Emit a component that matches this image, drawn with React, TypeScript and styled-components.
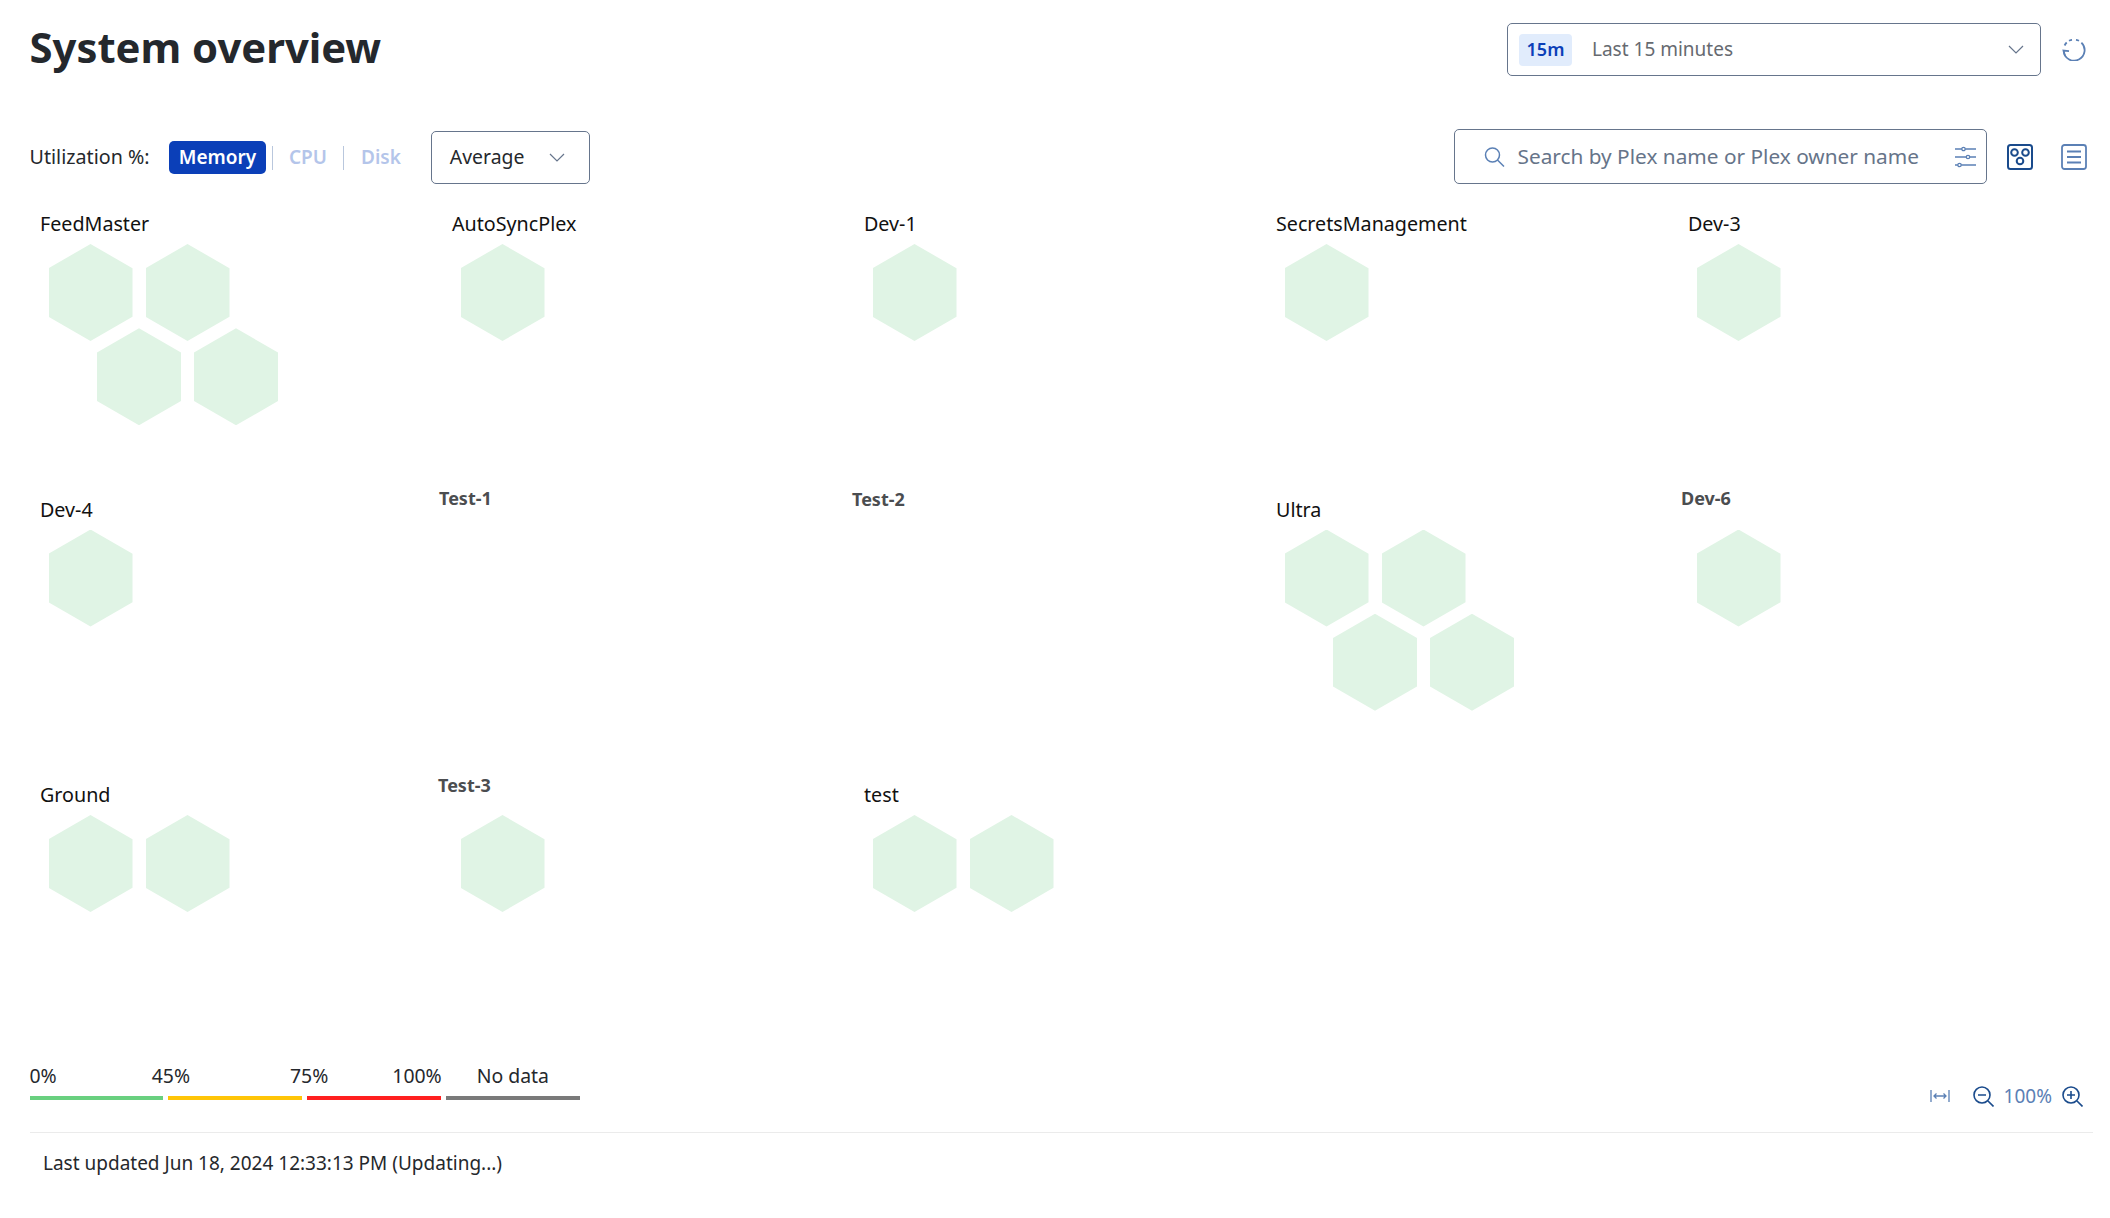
import React from "react";
import styled, { createGlobalStyle } from "styled-components";

const Global = createGlobalStyle`
  html, body { margin: 0; padding: 0; background: #fff; }
  body { font-family: "Noto Sans", sans-serif; color: #25282c; }
`;

const Page = styled.div`
  width: 2110px;
  height: 1218px;
  box-sizing: border-box;
  padding: 23px 17px 0 29.5px;
  overflow: hidden;
`;
const Header = styled.header`
  display: flex;
  justify-content: space-between;
  align-items: center;
  height: 53px;
  padding-right: 7px;
`;
const Title = styled.h1`
  margin: -5px 0 0;
  font-size: 41.8px;
  line-height: 52px;
  font-weight: 700;
  color: #24282d;
`;
const RightGroup = styled.div<{ $gap: number }>`
  display: flex;
  align-items: center;
  gap: ${(p) => p.$gap}px;
`;
const SelectBox = styled.div<{ $w: number; $h: number; $pad: number }>`
  width: ${(p) => p.$w}px;
  height: ${(p) => p.$h}px;
  box-sizing: border-box;
  padding: 0 ${(p) => p.$pad}px 0 11px;
  display: flex;
  align-items: center;
  border: 1px solid #66758c;
  border-radius: 5px;
`;
const Badge = styled.span`
  width: 53px;
  height: 32px;
  box-sizing: border-box;
  padding-bottom: 2px;
  border-radius: 4px;
  background: #e1ecfc;
  color: #0b3fb8;
  font-size: 18px;
  font-weight: 600;
  display: flex;
  align-items: center;
  justify-content: center;
`;
const RangeText = styled.span`
  margin-left: 20px;
  padding-bottom: 2px;
  font-size: 19px;
  color: #666a70;
  flex: 1;
`;
const Toolbar = styled.section`
  margin-top: 53px;
  height: 55px;
  display: flex;
  justify-content: space-between;
  align-items: flex-end;
  padding-right: 6.5px;
`;
const Filters = styled.div`
  display: flex;
  align-items: center;
  height: 53px;
`;
const FilterLabel = styled.span`
  font-size: 19.7px;
  padding-bottom: 2px;
  color: #25282c;
  width: 139.5px;
`;
const Tab = styled.span<{ $active?: boolean }>`
  height: 33px;
  box-sizing: border-box;
  padding-bottom: 2px;
  display: flex;
  align-items: center;
  justify-content: center;
  font-size: 19px;
  font-weight: 600;
  border-radius: 5px;
  width: ${(p) => (p.$active ? "97px" : "auto")};
  color: ${(p) => (p.$active ? "#ffffff" : "#b4c5ea")};
  background: ${(p) => (p.$active ? "#0b3fb8" : "transparent")};
`;
const TabDivider = styled.span<{ $l: number; $r: number }>`
  width: 1px;
  height: 24px;
  background: #b9c7dd;
  margin: 0 ${(p) => p.$r}px 0 ${(p) => p.$l}px;
`;
const AverageBox = styled(SelectBox)`
  margin-left: 30px;
  padding-left: 18px;
  justify-content: space-between;
`;
const AverageText = styled.span`
  font-size: 19.4px;
  padding-bottom: 2px;
`;
const SearchBox = styled.div`
  width: 533px;
  height: 55px;
  box-sizing: border-box;
  border: 1px solid #66758c;
  border-radius: 5px;
  display: flex;
  align-items: center;
  padding: 0 10px 0 29px;
`;
const Placeholder = styled.span`
  margin-left: 13px;
  padding-bottom: 2px;
  flex: 1;
  font-size: 20.8px;
  color: #667489;
  white-space: nowrap;
`;
const PlexGrid = styled.main`
  margin-top: 30px;
  height: 854px;
  padding-left: 10.5px;
  display: grid;
  grid-template-columns: repeat(5, 412px);
  grid-template-rows: repeat(3, 285.5px);
`;
const Cell = styled.article`
  min-width: 0;
`;
const PlexName = styled.div<{ $bold?: boolean; $dx?: number; $dy?: number }>`
  height: 20px;
  line-height: 20px;
  font-size: ${(p) => (p.$bold ? "18px" : "19.7px")};
  font-weight: ${(p) => (p.$bold ? 700 : 400)};
  color: ${(p) => (p.$bold ? "#4b4d50" : "#111")};
  margin: ${(p) => p.$dy ?? 0}px 0 ${(p) => -(p.$dy ?? 0)}px ${(p) => p.$dx ?? 0}px;
`;
const HexRows = styled.div`
  padding: 10px 0 0 8.5px;
`;
const HexRow = styled.div<{ $offset?: boolean }>`
  display: flex;
  gap: 13px;
  margin-left: ${(p) => (p.$offset ? "48.5px" : "0")};
  margin-top: ${(p) => (p.$offset ? "-12.7px" : "0")};
`;
const Hex = styled.div`
  width: 84px;
  height: 97px;
  background: #e0f4e5;
  clip-path: polygon(50% 0, 100% 25%, 100% 75%, 50% 100%, 0 75%, 0 25%);
`;
const BottomRow = styled.section`
  display: flex;
  justify-content: space-between;
  align-items: flex-end;
  height: 32px;
  padding-right: 10px;
`;
const Legend = styled.div`
  width: 550px;
`;
const LegendLabels = styled.div`
  display: flex;
  height: 20px;
  line-height: 20px;
  font-size: 19.4px;
  color: #25282c;
`;
const LegendLabel = styled.span<{ $x: number }>`
  margin-left: ${(p) => p.$x}px;
`;
const LegendBars = styled.div`
  margin-top: 10px;
  display: flex;
  gap: 5px;
`;
const LegendBar = styled.div<{ $c: string }>`
  width: 134px;
  height: 4px;
  background: ${(p) => p.$c};
`;
const ZoomControls = styled.div`
  display: flex;
  align-items: center;
  margin-bottom: -7px;
  height: 22px;
  color: #5b80b5;
  font-size: 19px;
`;
const ZoomSpacer = styled.span`
  width: 23px;
`;
const ZoomValue = styled.span`
  margin: 0 10px 0 10px;
  padding-bottom: 1px;
`;
const Footer = styled.footer`
  margin-top: 32px;
  border-top: 1px solid #ebebeb;
  padding: 20px 0 0 13.5px;
  font-size: 19px;
  line-height: 20px;
  color: #25282c;
`;

const Chevron = ({ color = "#66758c" }: { color?: string }) => (
  <svg width="16" height="9" viewBox="0 0 16 9" fill="none" stroke={color} strokeWidth="1.2">
    <path d="M1 1l7 7 7-7" />
  </svg>
);
const RefreshIcon = () => (
  <svg width="24" height="22" viewBox="0 0 24 22" fill="none" stroke="#5b80b5" strokeWidth="1.8">
    <path d="M2.600 6.500A10.500 10.500 0 0 1 4.700 3.500" />
    <path d="M7 1.800A10.500 10.500 0 0 1 10 .8" />
    <path d="M14 .8A10.500 10.500 0 0 1 17 1.800" />
    <path d="M19.400 3.600A10.500 10.500 0 1 1 1.700 12.500" />
    <path d="M7 12.200L1.500 11.500 3 17" />
  </svg>
);
const SearchIcon = () => (
  <svg width="21" height="20" viewBox="0 0 21 20" fill="none" stroke="#5b80b5" strokeWidth="1.5">
    <circle cx="8.500" cy="8" r="7" />
    <path d="M13.500 13l6.500 6.500" />
  </svg>
);
const SlidersIcon = () => (
  <svg width="22" height="22" viewBox="0 0 22 22" fill="none" stroke="#5b80b5" strokeWidth="1.300">
    <path d="M1 3h6.800M11.200 3H22M1 11h11.300M15.700 11H22M1 19h2.800M7.200 19H22" />
    <circle cx="9.500" cy="3" r="1.700" />
    <circle cx="14" cy="11" r="1.700" />
    <circle cx="5.500" cy="19" r="1.700" />
  </svg>
);
const HexViewIcon = () => (
  <svg width="26" height="26" viewBox="0 0 26 26" fill="none" stroke="#1a4b8c" strokeWidth="2">
    <rect x="1" y="1" width="24" height="24" rx="2.500" />
    <circle cx="7.500" cy="8.500" r="3.300" />
    <circle cx="18.500" cy="8.500" r="3.300" />
    <circle cx="13" cy="17" r="3.300" />
  </svg>
);
const ListIcon = () => (
  <svg width="26" height="26" viewBox="0 0 26 26" fill="none" stroke="#5b80b5" strokeWidth="1.800">
    <rect x="1" y="1" width="24" height="24" rx="2.500" />
    <path d="M6 7.500h14M6 13h14M6 18.500h14" />
  </svg>
);
const FitIcon = () => (
  <svg width="20" height="12" viewBox="0 0 20 12" fill="none" stroke="#5b80b5" strokeWidth="1.300">
    <path d="M1 0v12M19 0v12M4 6h12M6.500 3.500L4 6l2.500 2.500M13.500 3.500L16 6l-2.500 2.500" />
  </svg>
);
const ZoomIcon = ({ plus }: { plus?: boolean }) => (
  <svg width="21" height="21" viewBox="0 0 21 21" fill="none" stroke="#1a4b8c" strokeWidth="1.600">
    <circle cx="9" cy="9" r="8" />
    <path d="M15 15l5.500 5.500M5 9h8" />
    {plus && <path d="M9 5v8" />}
  </svg>
);

const plexes: { name: string; hex: number[]; bold?: boolean; dx?: number; dy?: number }[] = [
  { name: "FeedMaster", hex: [2, 2] },
  { name: "AutoSyncPlex", hex: [1] },
  { name: "Dev-1", hex: [1] },
  { name: "SecretsManagement", hex: [1] },
  { name: "Dev-3", hex: [1] },
  { name: "Dev-4", hex: [1] },
  { name: "Test-1", hex: [], bold: true, dx: -13, dy: -12 },
  { name: "Test-2", hex: [], bold: true, dx: -12, dy: -11 },
  { name: "Ultra", hex: [2, 2] },
  { name: "Dev-6", hex: [1], bold: true, dx: -7, dy: -12 },
  { name: "Ground", hex: [2] },
  { name: "Test-3", hex: [1], bold: true, dx: -14, dy: -10 },
  { name: "test", hex: [2] },
];

const legend = [
  { label: "0%", x: 0 },
  { label: "45%", x: 95 },
  { label: "75%", x: 100 },
  { label: "100%", x: 64 },
  { label: "No data", x: 35 },
];
const bars = ["#69d07f", "#ffc507", "#ff2020", "#7a7a7a"];

export default function App() {
  return (
    <Page>
      <Global />
      <Header>
        <Title>System overview</Title>
        <RightGroup $gap={21}>
          <SelectBox $w={534} $h={53} $pad={16}>
            <Badge>15m</Badge>
            <RangeText>Last 15 minutes</RangeText>
            <Chevron />
          </SelectBox>
          <RefreshIcon />
        </RightGroup>
      </Header>
      <Toolbar>
        <Filters>
          <FilterLabel>Utilization %:</FilterLabel>
          <Tab $active>Memory</Tab>
          <TabDivider $l={6} $r={16} />
          <Tab>CPU</Tab>
          <TabDivider $l={16} $r={17} />
          <Tab>Disk</Tab>
          <AverageBox $w={159} $h={53} $pad={24}>
            <AverageText>Average</AverageText>
            <Chevron />
          </AverageBox>
        </Filters>
        <RightGroup $gap={20}>
          <SearchBox>
            <SearchIcon />
            <Placeholder>Search by Plex name or Plex owner name</Placeholder>
            <SlidersIcon />
          </SearchBox>
          <RightGroup $gap={28}>
            <HexViewIcon />
            <ListIcon />
          </RightGroup>
        </RightGroup>
      </Toolbar>
      <PlexGrid>
        {plexes.map((p) => (
          <Cell key={p.name}>
            <PlexName $bold={p.bold} $dx={p.dx} $dy={p.dy}>
              {p.name}
            </PlexName>
            <HexRows>
              {p.hex.map((count, r) => (
                <HexRow key={r} $offset={r > 0}>
                  {Array.from({ length: count }, (_, i) => (
                    <Hex key={i} />
                  ))}
                </HexRow>
              ))}
            </HexRows>
          </Cell>
        ))}
      </PlexGrid>
      <BottomRow>
        <Legend>
          <LegendLabels>
            {legend.map((l) => (
              <LegendLabel key={l.label} $x={l.x}>
                {l.label}
              </LegendLabel>
            ))}
          </LegendLabels>
          <LegendBars>
            {bars.map((c) => (
              <LegendBar key={c} $c={c} />
            ))}
          </LegendBars>
        </Legend>
        <ZoomControls>
          <FitIcon />
          <ZoomSpacer />
          <ZoomIcon />
          <ZoomValue>100%</ZoomValue>
          <ZoomIcon plus />
        </ZoomControls>
      </BottomRow>
      <Footer>Last updated Jun 18, 2024 12:33:13 PM (Updating...)</Footer>
    </Page>
  );
}
